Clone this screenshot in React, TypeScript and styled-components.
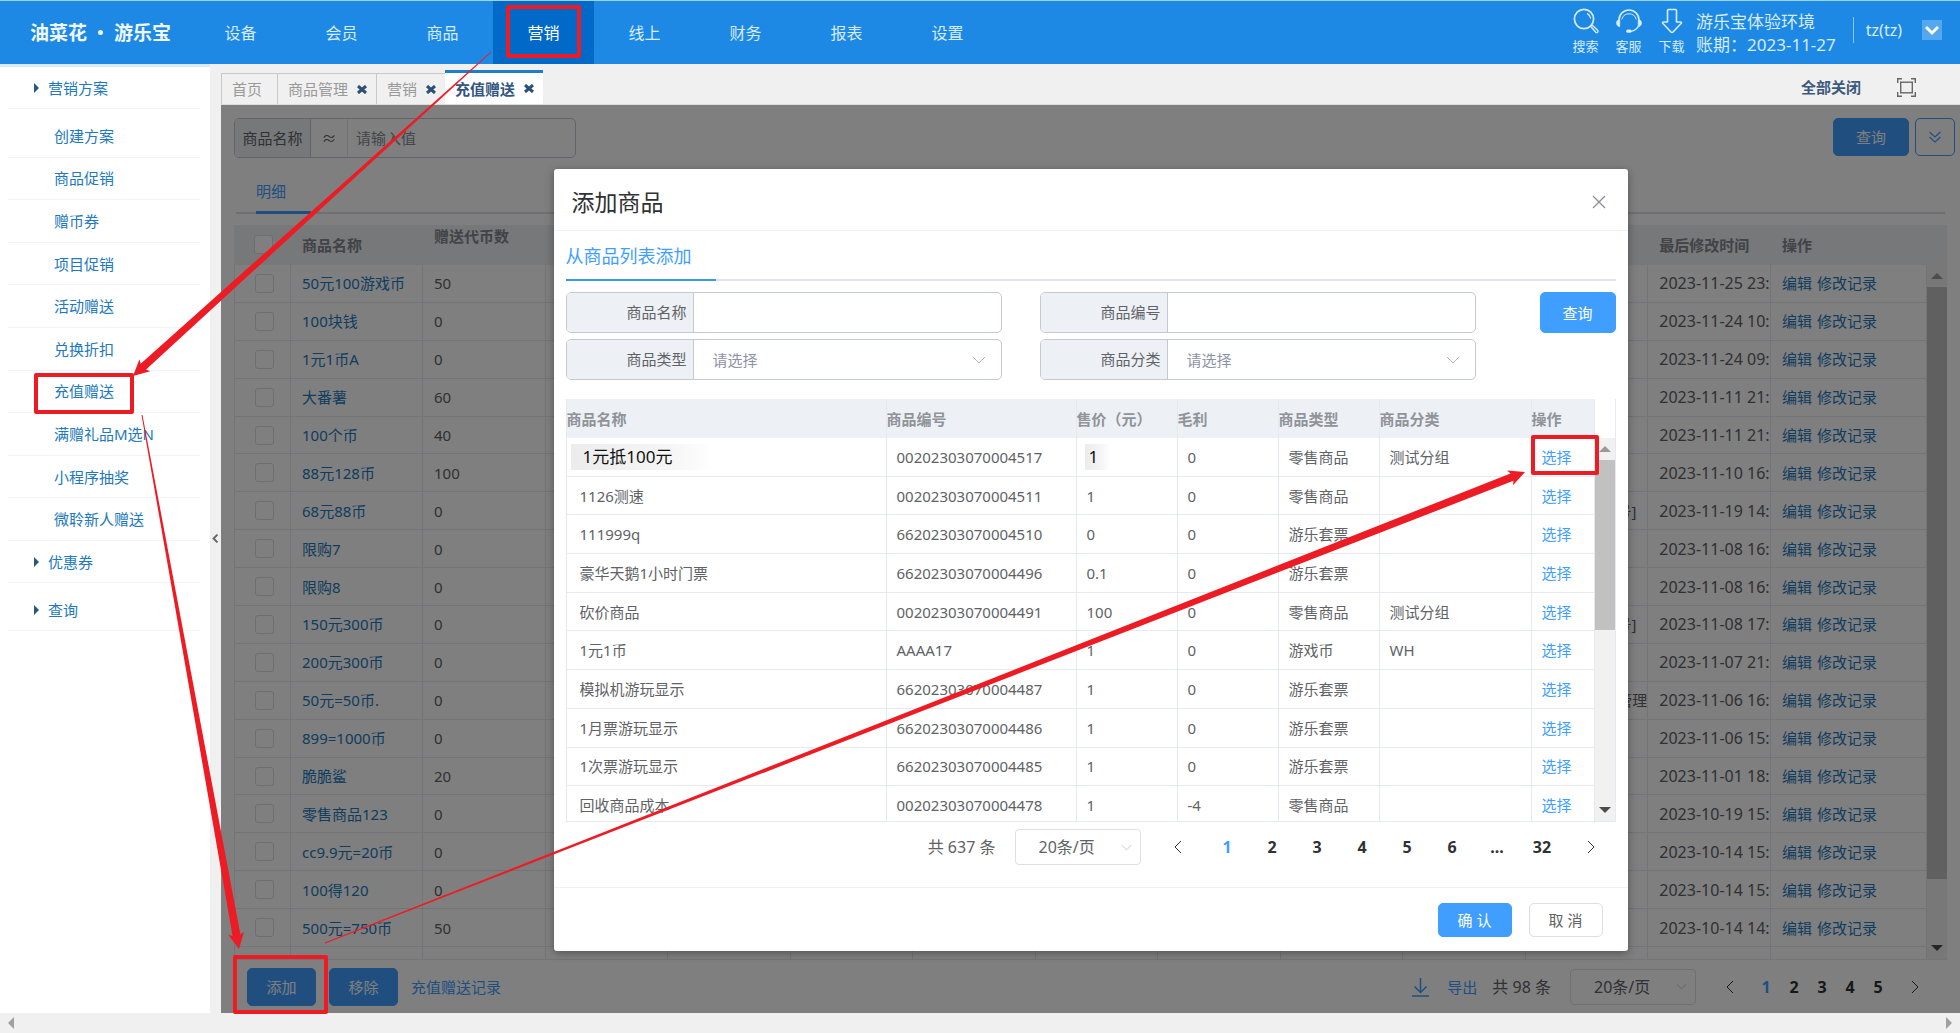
import React from "react";
import styled, { createGlobalStyle } from "styled-components";

const BLUE = "#409eff";
const LINK = "#2178bd";
const RED = "#ed1c24";
const HEAD_BG = "#edf0f5";
const LINE = "#e6e9f0";
const FIELD_LINE = "#c4c9d4";

const GlobalStyle = createGlobalStyle`
  *, *::before, *::after { box-sizing: border-box; }
  body { margin: 0; background: #fff; overflow: hidden; }
  body, button, input, select, table {
    font-family: "Noto Sans", "Noto Sans CJK SC", sans-serif;
    font-size: 15px;
    line-height: 22px;
  }
  button, input, select { margin: 0; padding: 0; border: 0; background: none; color: inherit; border-radius: 0; }
  button { cursor: pointer; }
  a { color: inherit; text-decoration: none; }
  ul { list-style: none; margin: 0; padding: 0; }
  h1, h2 { margin: 0; font-weight: 400; }
  svg { display: block; flex: none; }
`;

const Page = styled.div`
  position: relative;
  display: flex;
  flex-direction: column;
  height: 100vh;
`;

/* ---------- top bar ---------- */

const TopBar = styled.header`
  display: flex;
  align-items: stretch;
  height: 64px;
  flex: none;
  background: #1e88e5;
  border-top: 1px solid #9bd3f7;
  color: #d6ecff;
`;

const Logo = styled.h1`
  width: 190px;
  padding-left: 30px;
  display: flex;
  align-items: center;
  gap: 11px;
  font-size: 19px;
  font-weight: 700;
  color: #eef7ff;
  white-space: nowrap;
`;

const LogoDot = styled.span`
  width: 5px;
  height: 5px;
  border-radius: 50%;
  background: #eef7ff;
`;

const MainNav = styled.nav`
  display: flex;
  flex: 1;
`;

const NavItem = styled.a<{ $active?: boolean }>`
  width: 101px;
  display: flex;
  align-items: center;
  justify-content: center;
  font-size: 16px;
  color: ${(p) => (p.$active ? "#fff" : "#d6ecff")};
  background: ${(p) => (p.$active ? "#016ac9" : "transparent")};
`;

const Tools = styled.div`
  display: flex;
  gap: 16px;
  padding-top: 6px;
`;

const Tool = styled.button`
  display: flex;
  flex-direction: column;
  align-items: center;
  width: 27px;
  font-size: 13px;
  line-height: 20px;
  gap: 2px;
  align-self: flex-start;
  white-space: nowrap;
`;

const Account = styled.div`
  display: flex;
  flex-direction: column;
  justify-content: center;
  padding: 0 17px 0 11px;
  font-size: 17px;
  line-height: 23px;
  white-space: nowrap;
`;

const User = styled.div`
  display: flex;
  align-items: center;
  gap: 20px;
  padding: 0 18px 5px 0;
  font-size: 16px;
`;

const UserName = styled.span`
  padding-left: 12px;
  border-left: 1px solid #8cc4f5;
  line-height: 26px;
`;

const UserMenu = styled.button`
  width: 20px;
  height: 20px;
  display: grid;
  place-items: center;
  background: #53a8f0;
  color: #fff;
`;

/* ---------- frame ---------- */

const Frame = styled.div`
  display: flex;
  flex: 1;
  min-height: 0;
`;

const Sidebar = styled.aside`
  width: 210px;
  flex: none;
  padding: 0 10px 0 8px;
  border-top: 3px solid #d6ecfb;
  color: ${LINK};
`;

const Group = styled.a<{ $tall?: boolean }>`
  display: flex;
  align-items: center;
  gap: 9px;
  height: ${(p) => (p.$tall ? 48 : 42)}px;
  padding: ${(p) => (p.$tall ? 6 : 0)}px 0 0 26px;
  border-bottom: 1px solid #f1f4f7;
`;

const SubList = styled.ul`
  display: flex;
  flex-direction: column;
  height: 432px;
  padding-top: 6px;
`;

const SubItem = styled.li`
  flex: 1;
  display: flex;
  align-items: center;
  padding-left: 46px;
  border-bottom: 1px solid #f1f4f7;
`;

const Splitter = styled.button`
  width: 11px;
  flex: none;
  display: grid;
  place-items: center;
  background: #f0f0f0;
  color: #666;
`;

const Main = styled.main`
  flex: 1;
  min-width: 0;
  display: flex;
  flex-direction: column;
`;

const TabBar = styled.div`
  display: flex;
  align-items: flex-end;
  height: 41px;
  flex: none;
  background: #f0f0f0;
  border-bottom: 1px solid #dcdcdc;
`;

const PageTab = styled.div<{ $active?: boolean }>`
  display: flex;
  align-items: center;
  gap: 9px;
  height: ${(p) => (p.$active ? 34 : 31)}px;
  padding: 0 9px 0 10px;
  border: solid #c8c8c8;
  border-width: 1px 0 0 1px;
  color: #999;
  ${(p) =>
    p.$active &&
    `
    border-width: 3px 0 0;
    border-color: #1b7fcb;
    background: #fff;
    color: #33567f;
    font-weight: 700;
  `}
`;

const PlainTab = styled(PageTab)`
  padding-right: 15px;
`;

const TabClose = styled.button`
  color: #2a5078;
`;

const TabTools = styled.div`
  margin-left: auto;
  display: flex;
  align-items: center;
  gap: 36px;
  height: 34px;
  padding-right: 44px;
`;

const CloseAll = styled.button`
  font-weight: 700;
  color: #3c5a7c;
`;

const IconButton = styled.button`
  color: #666;
`;

/* ---------- list page ---------- */

const Content = styled.div`
  position: relative;
  flex: 1;
  min-height: 0;
  display: flex;
  flex-direction: column;
  background: #fff;
  color: #606266;
`;

const FilterRow = styled.div`
  display: flex;
  justify-content: space-between;
  padding: 13px 5px 0 13px;
`;

const FilterGroup = styled.div`
  display: flex;
  width: 342px;
  height: 40px;
  border: 1px solid ${FIELD_LINE};
  border-radius: 5px;
  overflow: hidden;
`;

const FilterLabel = styled.label`
  width: 76px;
  line-height: 38px;
  text-align: center;
  background: ${HEAD_BG};
  border-right: 1px solid ${FIELD_LINE};
`;

const FilterOp = styled.span`
  width: 37px;
  line-height: 38px;
  text-align: center;
  border-right: 1px solid ${LINE};
`;

const TextInput = styled.input`
  flex: 1;
  min-width: 0;
  padding: 0 8px;
  &::placeholder { color: #888d96; opacity: 1; }
`;

const FilterActions = styled.div`
  display: flex;
  gap: 6px;
`;

const Button = styled.button<{ $width: number; $height?: number; $plain?: boolean }>`
  width: ${(p) => p.$width}px;
  height: ${(p) => p.$height ?? 38}px;
  border-radius: 5px;
  border: 1px solid ${(p) => (p.$plain ? "#dcdfe6" : BLUE)};
  background: ${(p) => (p.$plain ? "#fff" : BLUE)};
  color: ${(p) => (p.$plain ? "#606266" : "#fff")};
`;

const ExpandButton = styled.button`
  width: 40px;
  height: 38px;
  display: grid;
  place-items: center;
  border: 1px solid ${BLUE};
  border-radius: 5px;
  color: ${BLUE};
`;

const DetailTabs = styled.div`
  margin: 15px 15px 11px;
  padding-left: 20px;
  height: 41px;
  border-bottom: 2px solid #dcdfe8;
`;

const DetailTab = styled.button`
  display: block;
  width: 55px;
  height: 41px;
  padding-bottom: 3px;
  text-align: left;
  color: ${BLUE};
  border-bottom: 3px solid ${BLUE};
`;

const TableArea = styled.div`
  flex: 1;
  min-height: 0;
  display: flex;
  margin: 0 13px;
  overflow: hidden;
  border-bottom: 1px solid ${LINE};
`;

const TableView = styled.div`
  flex: 1;
  min-width: 0;
`;

const GiftTable = styled.table`
  width: 100%;
  height: 760px;
  table-layout: fixed;
  border-collapse: separate;
  border-spacing: 0;
  th, td {
    height: 37px;
    padding: 0 0 0 11px;
    text-align: left;
    white-space: nowrap;
    overflow: hidden;
    border-right: 1px solid ${LINE};
    border-bottom: 1px solid ${LINE};
  }
  th {
    height: 40px;
    background: ${HEAD_BG};
    border-color: ${HEAD_BG};
    color: #82868f;
    font-weight: 700;
  }
  td:first-child { border-left: 1px solid ${LINE}; }
`;

const TopTh = styled.th`
  vertical-align: top;
`;

const CheckTh = styled.th`
  width: 57px;
`;

const NameTh = styled.th`
  width: 132px;
`;

const ActionTh = styled.th`
  width: 156px;
`;

const NameTd = styled.td`
  color: ${LINK};
`;

const DateTd = styled.td`
  font-size: 16px;
`;

const EditorTd = styled.td<{ $cut?: boolean }>`
  && {
    text-align: right;
    padding: 0 ${(p) => (p.$cut ? 0 : 11)}px 0 0;
  }
`;

const Check = styled.input`
  appearance: none;
  display: block;
  width: 19px;
  height: 19px;
  margin-left: 9px;
  border: 1px solid #d9dce3;
  border-radius: 3px;
  background: #fff;
`;

const RowLinks = styled.span`
  display: flex;
  gap: 5px;
  color: ${LINK};
`;

const ScrollRail = styled.div<{ $head: number; $headBg: string }>`
  width: 20px;
  flex: none;
  display: flex;
  flex-direction: column;
  border-top: ${(p) => p.$head}px solid ${(p) => p.$headBg};
  background: #f1f1f1;
`;

const RailArrow = styled.span<{ $dim?: boolean }>`
  height: 22px;
  display: grid;
  place-items: center;
  color: ${(p) => (p.$dim ? "#9a9a9a" : "#4c4c4c")};
`;

const RailTrack = styled.div`
  flex: 1;
`;

const RailThumb = styled.div<{ $size: number }>`
  height: ${(p) => p.$size}%;
  background: #c1c1c1;
`;

const BottomBar = styled.div`
  display: flex;
  align-items: center;
  flex: none;
  height: 53px;
  padding: 0 23px 0 26px;
`;

const BottomActions = styled.div`
  display: flex;
  align-items: center;
  gap: 13px;
  margin-right: auto;
  color: ${BLUE};
`;

const ExportLink = styled.a`
  display: flex;
  align-items: center;
  gap: 18px;
  margin-right: 15px;
  color: ${BLUE};
`;

/* ---------- pager ---------- */

const PagerBox = styled.div`
  display: flex;
  align-items: center;
  justify-content: flex-end;
`;

const PagerTotal = styled.span`
  font-size: 16px;
`;

const PageNumber = styled.button<{ $width: number; $current?: boolean }>`
  width: ${(p) => p.$width}px;
  height: 36px;
  display: grid;
  place-items: center;
  font-size: 16px;
  font-weight: 700;
  color: ${(p) => (p.$current ? BLUE : "#303133")};
`;

const SelectBox = styled.div`
  position: relative;
  display: flex;
  flex: 1;
  height: 100%;
  color: #b4b9c4;
`;

const SizeBox = styled(SelectBox)`
  flex: none;
  width: 126px;
  height: 36px;
  margin: 0 11px 0 19px;
`;

const Select = styled.select<{ $outlined?: boolean }>`
  appearance: none;
  width: 100%;
  padding: 0 32px 0 ${(p) => (p.$outlined ? 23 : 19)}px;
  border: ${(p) => (p.$outlined ? "1px solid #dcdfe6" : "0")};
  border-radius: 4px;
  font-size: ${(p) => (p.$outlined ? 16 : 15)}px;
  color: ${(p) => (p.$outlined ? "#606266" : "#8c93a8")};
`;

const SelectArrow = styled.span<{ $right: number }>`
  position: absolute;
  top: 0;
  bottom: 0;
  right: ${(p) => p.$right}px;
  display: grid;
  place-items: center;
  pointer-events: none;
`;

/* ---------- dialog ---------- */

const Backdrop = styled.div`
  position: absolute;
  inset: 0;
  display: flex;
  justify-content: center;
  align-items: flex-start;
  padding-top: 64px;
  background: rgba(0, 0, 0, 0.5);
`;

const Dialog = styled.section`
  width: 1074px;
  max-width: 96%;
  background: #fff;
  border-radius: 3px;
  box-shadow: 0 2px 8px rgba(0, 0, 0, 0.35);
`;

const DialogHead = styled.div`
  display: flex;
  align-items: center;
  justify-content: space-between;
  height: 62px;
  padding: 4px 22px 0 18px;
  border-bottom: 1px solid #eff1f4;
`;

const DialogTitle = styled.h2`
  font-size: 23px;
  line-height: 32px;
  color: #303133;
`;

const DialogBody = styled.div`
  padding: 0 12px;
`;

const DialogTabs = styled.div`
  height: 50px;
  margin-bottom: 11px;
  border-bottom: 2px solid #e1e4ec;
`;

const DialogTab = styled.button`
  display: block;
  width: 150px;
  height: 50px;
  padding-top: 2px;
  text-align: left;
  font-size: 18px;
  color: ${BLUE};
  border-bottom: 2px solid #3f97ea;
`;

const SearchForm = styled.form`
  display: flex;
  align-items: flex-start;
  gap: 64px;
  margin-bottom: 19px;
`;

const FieldGrid = styled.div`
  flex: 1;
  display: grid;
  grid-template-columns: 1fr 1fr;
  gap: 6px 38px;
`;

const Field = styled.div`
  display: flex;
  height: 41px;
  border: 1px solid ${FIELD_LINE};
  border-radius: 5px;
  overflow: hidden;
`;

const FieldLabel = styled.label`
  width: 127px;
  padding-right: 6px;
  line-height: 39px;
  text-align: right;
  background: ${HEAD_BG};
  border-right: 1px solid ${FIELD_LINE};
`;

const ProductArea = styled.div`
  display: flex;
  height: 423px;
  overflow: hidden;
  border: solid ${LINE};
  border-width: 0 1px 1px;
`;

const ProductTable = styled.table`
  width: 100%;
  height: 426px;
  table-layout: fixed;
  border-collapse: separate;
  border-spacing: 0;
  th, td {
    height: 38px;
    padding: 0 0 0 10px;
    text-align: left;
    white-space: nowrap;
    border-right: 1px solid ${LINE};
    border-bottom: 1px solid ${LINE};
  }
  td:first-child { padding-left: 13px; }
  th {
    height: 39px;
    padding: 2px 0 0;
    background: ${HEAD_BG};
    border-bottom-color: ${HEAD_BG};
    color: #909399;
    font-weight: 700;
  }
`;

const SizedTh = styled.th<{ $width?: number }>`
  width: ${(p) => (p.$width ? `${p.$width}px` : "auto")};
`;

const Patch = styled.span<{ $wide?: boolean }>`
  display: block;
  width: ${(p) => (p.$wide ? 144 : 25)}px;
  margin-left: ${(p) => (p.$wide ? -9 : -2)}px;
  padding-left: ${(p) => (p.$wide ? 12 : 4)}px;
  font-size: 17px;
  line-height: 26px;
  color: #111;
  background: linear-gradient(90deg, #ececec, #f6f6f6 70%, #fff);
`;

const PickLink = styled.button`
  display: block;
  color: ${BLUE};
`;

const DialogPager = styled(PagerBox)`
  height: 36px;
  margin: 7px -2px 22px 0;
`;

const DialogFoot = styled.div`
  display: flex;
  justify-content: flex-end;
  gap: 17px;
  padding: 15px 25px 14px;
  border-top: 1px solid #eff1f4;
`;

/* ---------- window scroll bar and marks ---------- */

const WindowRail = styled.div`
  display: flex;
  align-items: center;
  justify-content: space-between;
  height: 20px;
  flex: none;
  padding: 0 5px;
  background: #f0f0f0;
  color: #a0a0a0;
`;

const Marks = styled.svg`
  position: absolute;
  top: 0;
  left: 0;
  width: 100%;
  pointer-events: none;
`;

/* ---------- icons ---------- */

type Dir = "up" | "down" | "left" | "right";

const TURN: Record<Dir, number> = { up: 180, down: 0, left: 90, right: -90 };

const Triangle = ({ dir, size = 12 }: { dir: Dir; size?: number }) => (
  <svg width={size} height={size} viewBox="0 0 12 12" aria-hidden="true">
    <path d="M0 3h12L6 9z" fill="currentColor" transform={`rotate(${TURN[dir]} 6 6)`} />
  </svg>
);

const Chevron = ({ dir, size = 14, stroke = 1 }: { dir: Dir; size?: number; stroke?: number }) => (
  <svg width={size} height={size} viewBox="0 0 14 14" fill="none" stroke="currentColor" strokeWidth={stroke} aria-hidden="true">
    <path d="M1 4l6 6 6-6" transform={`rotate(${TURN[dir]} 7 7)`} />
  </svg>
);

const Caret = () => (
  <svg width="5" height="10" viewBox="0 0 5 10" aria-hidden="true">
    <path d="M0 0l5 5-5 5z" fill="#28587f" />
  </svg>
);

const BoldCross = () => (
  <svg width="10" height="9" viewBox="0 0 10 9" stroke="currentColor" strokeWidth="3" aria-hidden="true">
    <path d="M1 1l8 7M9 1L1 8" />
  </svg>
);

const SearchIcon = () => (
  <svg width="26" height="27" viewBox="0 0 26 27" fill="none" stroke="currentColor" strokeWidth="1.7" aria-hidden="true">
    <circle cx="11" cy="12" r="9.6" />
    <path d="M14.5 6.6a6.6 6.6 0 0 1 3 4.4" strokeWidth="1.3" strokeLinecap="round" />
    <path d="M17.6 19.2l1.4-1.3 5.6 5.4a1.2 1.2 0 0 1-1.9 1.9z" strokeWidth="1.4" />
  </svg>
);

const HeadsetIcon = () => (
  <svg width="26" height="27" viewBox="0 0 26 27" fill="none" stroke="currentColor" strokeWidth="1.6" aria-hidden="true">
    <path d="M3 15V13a10 10 0 0 1 20 0v2" />
    <path d="M5.8 12.5a7.4 7.4 0 0 1 14.4 0" strokeWidth="1" />
    <path d="M3.8 12.6c-2 0-3.3 1.4-3.3 3.4s1.3 3.6 3.3 3.8zM22.2 12.6c2 0 3.3 1.4 3.3 3.4s-1.3 3.6-3.3 3.8z" fill="currentColor" strokeWidth="0.6" />
    <path d="M22.4 19c-1.2 3-3.8 4.8-7.4 5.4" strokeWidth="1.3" />
    <rect x="10.2" y="22.6" width="5.4" height="3.2" rx="1.6" fill="currentColor" stroke="none" />
  </svg>
);

const DownloadIcon = () => (
  <svg width="22" height="27" viewBox="0 0 22 27" fill="none" stroke="currentColor" strokeWidth="1.6" strokeLinejoin="round" aria-hidden="true">
    <path d="M6.5 3.5a1 1 0 0 1 1-1h7a1 1 0 0 1 1 1V15h4.2a.8.8 0 0 1 .6 1.3L12 25a1.3 1.3 0 0 1-2 0L1.7 16.3a.8.8 0 0 1 .6-1.3h4.2z" />
  </svg>
);

const FullscreenIcon = () => (
  <svg width="19" height="19" viewBox="0 0 19 19" fill="none" stroke="currentColor" strokeWidth="1.4" aria-hidden="true">
    <path d="M.7 5V.7H5M14 .7h4.3V5M18.3 14v4.3H14M5 18.3H.7V14" />
    <rect x="3.7" y="4.2" width="11.6" height="10.6" />
  </svg>
);

const DoubleChevron = () => (
  <svg width="12" height="12" viewBox="0 0 12 12" fill="none" stroke="currentColor" strokeWidth="1.2" aria-hidden="true">
    <path d="M.6 1L6 6l5.4-5M.6 6L6 11l5.4-5" />
  </svg>
);

const ExportIcon = () => (
  <svg width="17" height="20" viewBox="0 0 17 20" fill="none" stroke="currentColor" strokeWidth="1.5" aria-hidden="true">
    <path d="M8.5 1v14M2.5 9.5l6 6 6-6M0 19h17" />
  </svg>
);

const ThinCross = () => (
  <svg width="14" height="14" viewBox="0 0 14 14" stroke="#8a8e96" strokeWidth="1.3" aria-hidden="true">
    <path d="M1 1l12 12M13 1L1 13" />
  </svg>
);

/* ---------- data ---------- */

const NAV = ["设备", "会员", "商品", "营销", "线上", "财务", "报表", "设置"];

const PLANS = [
  "创建方案", "商品促销", "赠币券", "项目促销", "活动赠送",
  "兑换折扣", "充值赠送", "满赠礼品M选N", "小程序抽奖", "微聆新人赠送",
];

type Gift = [name: string, coins: number, changed: string, editor?: string];

const GIFTS: Gift[] = [
  ["50元100游戏币", 50, "2023-11-25 23:"],
  ["100块钱", 0, "2023-11-24 10:"],
  ["1元1币A", 0, "2023-11-24 09:"],
  ["大番薯", 60, "2023-11-11 21:"],
  ["100个币", 40, "2023-11-11 21:"],
  ["88元128币", 100, "2023-11-10 16:"],
  ["68元88币", 0, "2023-11-19 14:", "号]"],
  ["限购7", 0, "2023-11-08 16:"],
  ["限购8", 0, "2023-11-08 16:"],
  ["150元300币", 0, "2023-11-08 17:", "号]"],
  ["200元300币", 0, "2023-11-07 21:"],
  ["50元=50币.", 0, "2023-11-06 16:", "管理"],
  ["899=1000币", 0, "2023-11-06 15:"],
  ["脆脆鲨", 20, "2023-11-01 18:"],
  ["零售商品123", 0, "2023-10-19 15:"],
  ["cc9.9元=20币", 0, "2023-10-14 15:"],
  ["100得120", 0, "2023-10-14 15:"],
  ["500元=750币", 50, "2023-10-14 14:"],
];

const PRODUCTS = [
  ["1元抵100元", "00202303070004517", "1", "0", "零售商品", "测试分组"],
  ["1126测速", "00202303070004511", "1", "0", "零售商品", ""],
  ["111999q", "66202303070004510", "0", "0", "游乐套票", ""],
  ["豪华天鹅1小时门票", "66202303070004496", "0.1", "0", "游乐套票", ""],
  ["砍价商品", "00202303070004491", "100", "0", "零售商品", "测试分组"],
  ["1元1币", "AAAA17", "1", "0", "游戏币", "WH"],
  ["模拟机游玩显示", "66202303070004487", "1", "0", "游乐套票", ""],
  ["1月票游玩显示", "66202303070004486", "1", "0", "游乐套票", ""],
  ["1次票游玩显示", "66202303070004485", "1", "0", "游乐套票", ""],
  ["回收商品成本", "00202303070004478", "1", "-4", "零售商品", ""],
];

const PRODUCT_COLUMNS: [string, number?][] = [
  ["商品名称"], ["商品编号", 190], ["售价（元）", 101], ["毛利", 101],
  ["商品类型", 101], ["商品分类", 152], ["操作", 63],
];

const SPACER_COLUMNS = [0, 1, 2, 3, 4, 5, 6, 7];

/* ---------- parts ---------- */

const Pager = ({ total, pages, step, edge }: { total: number; pages: string[]; step: number; edge: number }) => (
  <>
    <PagerTotal>共 {total} 条</PagerTotal>
    <SizeBox>
      <Select $outlined aria-label="每页条数">
        <option>20条/页</option>
      </Select>
      <SelectArrow $right={9}><Chevron dir="down" size={11} /></SelectArrow>
    </SizeBox>
    <PageNumber $width={edge} aria-label="上一页"><Chevron dir="left" /></PageNumber>
    {pages.map((p, i) => (
      <PageNumber key={p} $width={step} $current={i === 0}>{p}</PageNumber>
    ))}
    <PageNumber $width={edge} aria-label="下一页"><Chevron dir="right" /></PageNumber>
  </>
);

const Rail = ({ head, headBg, size }: { head: number; headBg: string; size: number }) => (
  <ScrollRail $head={head} $headBg={headBg}>
    <RailArrow $dim><Triangle dir="up" /></RailArrow>
    <RailTrack><RailThumb $size={size} /></RailTrack>
    <RailArrow><Triangle dir="down" /></RailArrow>
  </ScrollRail>
);

/* A tapered arrow: hair-thin at the start, thick at the head. */
const Arrow = ({ from, to }: { from: [number, number]; to: [number, number] }) => {
  const dx = to[0] - from[0];
  const dy = to[1] - from[1];
  const len = Math.hypot(dx, dy);
  const at = (back: number, side: number) =>
    `${to[0] - (dx / len) * back - (dy / len) * side},${to[1] - (dy / len) * back + (dx / len) * side}`;
  const points = [
    at(len, 0.5), at(14, 4), at(16, 8), at(0, 0), at(16, -8), at(14, -4), at(len, -0.5),
  ];
  return <polygon points={points.join(" ")} fill={RED} />;
};

const ProductDialog = () => (
  <Dialog role="dialog" aria-labelledby="dialog-title">
    <DialogHead>
      <DialogTitle id="dialog-title">添加商品</DialogTitle>
      <button aria-label="关闭"><ThinCross /></button>
    </DialogHead>
    <DialogBody>
      <DialogTabs><DialogTab>从商品列表添加</DialogTab></DialogTabs>
      <SearchForm onSubmit={(e) => e.preventDefault()}>
        <FieldGrid>
          <Field>
            <FieldLabel htmlFor="p-name">商品名称</FieldLabel>
            <TextInput id="p-name" />
          </Field>
          <Field>
            <FieldLabel htmlFor="p-code">商品编号</FieldLabel>
            <TextInput id="p-code" />
          </Field>
          <Field>
            <FieldLabel htmlFor="p-type">商品类型</FieldLabel>
            <SelectBox>
              <Select id="p-type"><option>请选择</option></Select>
              <SelectArrow $right={15}><Chevron dir="down" /></SelectArrow>
            </SelectBox>
          </Field>
          <Field>
            <FieldLabel htmlFor="p-class">商品分类</FieldLabel>
            <SelectBox>
              <Select id="p-class"><option>请选择</option></Select>
              <SelectArrow $right={15}><Chevron dir="down" /></SelectArrow>
            </SelectBox>
          </Field>
        </FieldGrid>
        <Button $width={76} $height={41}>查询</Button>
      </SearchForm>
      <ProductArea>
        <TableView>
          <ProductTable>
            <thead>
              <tr>
                {PRODUCT_COLUMNS.map(([title, width]) => (
                  <SizedTh key={title} $width={width}>{title}</SizedTh>
                ))}
              </tr>
            </thead>
            <tbody>
              {PRODUCTS.map(([name, code, price, profit, type, group], i) => (
                <tr key={code}>
                  <td>{i === 0 ? <Patch $wide>{name}</Patch> : name}</td>
                  <td>{code}</td>
                  <td>{i === 0 ? <Patch>{price}</Patch> : price}</td>
                  <td>{profit}</td>
                  <td>{type}</td>
                  <td>{group}</td>
                  <td><PickLink>选择</PickLink></td>
                </tr>
              ))}
            </tbody>
          </ProductTable>
        </TableView>
        <Rail head={39} headBg="#fff" size={50} />
      </ProductArea>
      <DialogPager>
        <Pager total={637} pages={["1", "2", "3", "4", "5", "6", "...", "32"]} step={45} edge={53} />
      </DialogPager>
    </DialogBody>
    <DialogFoot>
      <Button $width={74} $height={34}>确 认</Button>
      <Button $width={74} $height={34} $plain>取 消</Button>
    </DialogFoot>
  </Dialog>
);

export default function App() {
  return (
    <Page>
      <GlobalStyle />
      <TopBar>
        <Logo>油菜花<LogoDot />游乐宝</Logo>
        <MainNav>
          {NAV.map((n) => (
            <NavItem key={n} href="#" $active={n === "营销"}>{n}</NavItem>
          ))}
        </MainNav>
        <Tools>
          <Tool><SearchIcon />搜索</Tool>
          <Tool><HeadsetIcon />客服</Tool>
          <Tool><DownloadIcon />下载</Tool>
        </Tools>
        <Account>
          <span>游乐宝体验环境</span>
          <span>账期：2023-11-27</span>
        </Account>
        <User>
          <UserName>tz(tz)</UserName>
          <UserMenu aria-label="用户菜单"><Chevron dir="down" stroke={3} /></UserMenu>
        </User>
      </TopBar>

      <Frame>
        <Sidebar>
          <Group href="#"><Caret />营销方案</Group>
          <SubList>
            {PLANS.map((p) => (
              <SubItem key={p}><a href="#">{p}</a></SubItem>
            ))}
          </SubList>
          <Group href="#"><Caret />优惠券</Group>
          <Group href="#" $tall><Caret />查询</Group>
        </Sidebar>
        <Splitter aria-label="收起菜单"><Chevron dir="left" size={9} stroke={3} /></Splitter>
        <Main>
          <TabBar>
            <PlainTab>首页</PlainTab>
            <PageTab>商品管理<TabClose aria-label="关闭商品管理"><BoldCross /></TabClose></PageTab>
            <PageTab>营销<TabClose aria-label="关闭营销"><BoldCross /></TabClose></PageTab>
            <PageTab $active>充值赠送<TabClose aria-label="关闭充值赠送"><BoldCross /></TabClose></PageTab>
            <TabTools>
              <CloseAll>全部关闭</CloseAll>
              <IconButton aria-label="全屏"><FullscreenIcon /></IconButton>
            </TabTools>
          </TabBar>

          <Content>
            <FilterRow>
              <FilterGroup>
                <FilterLabel htmlFor="f-name">商品名称</FilterLabel>
                <FilterOp>≈</FilterOp>
                <TextInput id="f-name" placeholder="请输入值" />
              </FilterGroup>
              <FilterActions>
                <Button $width={76}>查询</Button>
                <ExpandButton aria-label="展开"><DoubleChevron /></ExpandButton>
              </FilterActions>
            </FilterRow>
            <DetailTabs><DetailTab>明细</DetailTab></DetailTabs>
            <TableArea>
              <TableView>
                <GiftTable>
                  <thead>
                    <tr>
                      <CheckTh><Check type="checkbox" aria-label="全选" /></CheckTh>
                      <NameTh>商品名称</NameTh>
                      <TopTh>赠送代币数</TopTh>
                      {SPACER_COLUMNS.map((c) => <th key={c} />)}
                      <th />
                      <th>最后修改时间</th>
                      <ActionTh>操作</ActionTh>
                    </tr>
                  </thead>
                  <tbody>
                    {GIFTS.map(([name, coins, changed, editor]) => (
                      <tr key={name}>
                        <td><Check type="checkbox" aria-label={name} /></td>
                        <NameTd>{name}</NameTd>
                        <td>{coins}</td>
                        {SPACER_COLUMNS.map((c) => <td key={c} />)}
                        <EditorTd $cut={editor === "管理"}>{editor}</EditorTd>
                        <DateTd>{changed}</DateTd>
                        <td>
                          <RowLinks><a href="#">编辑</a><a href="#">修改记录</a></RowLinks>
                        </td>
                      </tr>
                    ))}
                    <tr>
                      <td /><td /><td />
                      {SPACER_COLUMNS.map((c) => <td key={c} />)}
                      <td /><td /><td />
                    </tr>
                  </tbody>
                </GiftTable>
              </TableView>
              <Rail head={40} headBg={HEAD_BG} size={91} />
            </TableArea>
            <BottomBar>
              <BottomActions>
                <Button $width={69}>添加</Button>
                <Button $width={69}>移除</Button>
                <a href="#">充值赠送记录</a>
              </BottomActions>
              <ExportLink href="#"><ExportIcon />导出</ExportLink>
              <Pager total={98} pages={["1", "2", "3", "4", "5"]} step={28} edge={45} />
            </BottomBar>
            <Backdrop><ProductDialog /></Backdrop>
          </Content>
        </Main>
      </Frame>

      <WindowRail>
        <Triangle dir="left" />
        <Triangle dir="right" />
      </WindowRail>

      <Marks viewBox="0 0 1960 1033" aria-hidden="true">
        <g fill="none" stroke={RED} strokeWidth="4" strokeLinejoin="round">
          <rect x="508" y="7" width="71" height="49" />
          <rect x="36" y="375" width="96" height="37" />
          <rect x="235" y="957" width="91" height="55" />
          <rect x="1533" y="437" width="64" height="36" />
        </g>
        <Arrow from={[491, 52]} to={[133, 376]} />
        <Arrow from={[142, 415]} to={[239, 949]} />
        <Arrow from={[325, 943]} to={[1525, 472]} />
      </Marks>
    </Page>
  );
}
